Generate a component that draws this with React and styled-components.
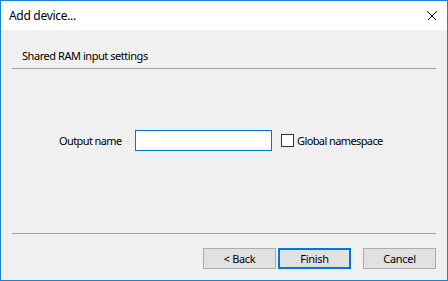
import React from "react";
import styled, { createGlobalStyle } from "styled-components";

const Global = createGlobalStyle`
  html, body { margin: 0; padding: 0; background: #ffffff; }
  body { font-family: "Noto Sans", "Open Sans", sans-serif; font-size: 11px; color: #000; }
  * { box-sizing: border-box; }
`;

const Window = styled.div`
  width: 448px;
  height: 281px;
  border: 1px solid #1883d7;
  display: flex;
  flex-direction: column;
  background: #f0f0f0;
`;

const TitleBar = styled.div`
  height: 29px;
  flex: none;
  background: #ffffff;
  display: flex;
  align-items: center;
  justify-content: space-between;
  padding: 0 10px 0 8px;
`;

const Title = styled.span`
  font-size: 12px;
  line-height: 16px;
  letter-spacing: -0.3px;
`;

const CloseIcon = () => (
  <svg width="10" height="10" viewBox="0 0 10 10" shapeRendering="crispEdges">
    <path d="M0.5 0.5 L9.5 9.5 M9.5 0.5 L0.5 9.5" stroke="#000" strokeWidth="1" fill="none" />
  </svg>
);

const Body = styled.div`
  flex: 1;
  display: flex;
  flex-direction: column;
  padding: 0 11px 11px;
`;

const Heading = styled.div`
  padding: 18px 0 4px 10px;
  line-height: 16px;
  letter-spacing: -0.45px;
`;

const Separator = styled.div`
  height: 1px;
  background: #a0a0a0;
  flex: none;
`;

const Middle = styled.div`
  flex: 1;
  padding: 61px 0 0 47px;
`;

const Row = styled.div`
  display: flex;
  align-items: center;
  height: 21px;
`;

const Label = styled.span`
  width: 76px;
  letter-spacing: -0.6px;
`;

const TextBox = styled.input`
  width: 137px;
  height: 21px;
  border: 1px solid #0078d7;
  background: #fff;
  margin: 0 9px 0 0;
  padding: 0 3px;
  font: inherit;
  outline: none;
`;

const CheckBox = styled.span`
  width: 13px;
  height: 13px;
  border: 1px solid #333333;
  background: #fff;
  margin-right: 3px;
`;

const CheckText = styled.span`
  letter-spacing: -0.6px;
`;

const Buttons = styled.div`
  display: flex;
  justify-content: flex-end;
  padding-top: 14px;
  gap: 2px;
`;

const Button = styled.button`
  width: 73px;
  height: 21px;
  margin-left: ${(p) => (p.$spaced ? "10px" : "0")};
  background: #e1e1e1;
  border: ${(p) => (p.$default ? "2px solid #0078d7" : "1px solid #adadad")};
  font: inherit;
  letter-spacing: -0.3px;
  color: #000;
  padding: 0;
`;

export default function App() {
  return (
    <>
      <Global />
      <Window>
        <TitleBar>
          <Title>Add device...</Title>
          <CloseIcon />
        </TitleBar>
        <Body>
          <Heading>Shared RAM input settings</Heading>
          <Separator />
          <Middle>
            <Row>
              <Label>Output name</Label>
              <TextBox type="text" />
              <CheckBox />
              <CheckText>Global namespace</CheckText>
            </Row>
          </Middle>
          <Separator />
          <Buttons>
            <Button>&lt; Back</Button>
            <Button $default>Finish</Button>
            <Button $spaced>Cancel</Button>
          </Buttons>
        </Body>
      </Window>
    </>
  );
}
